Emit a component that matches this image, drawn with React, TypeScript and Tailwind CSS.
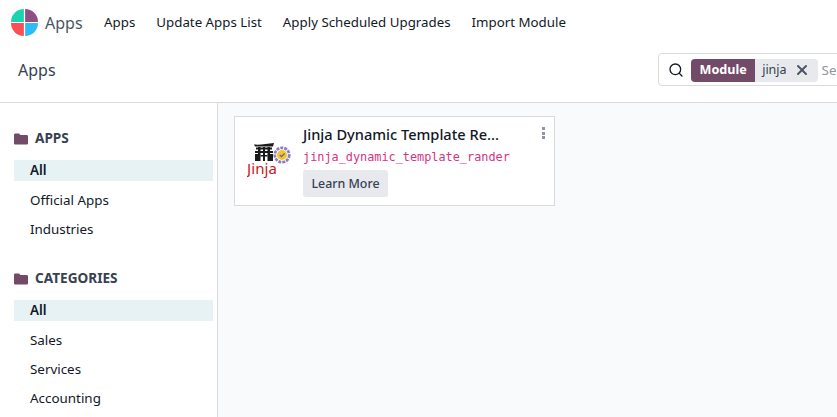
import { Search, X } from "lucide-react";

const font = { fontFamily: '"Noto Sans", sans-serif' };

const navItems = ["Apps", "Update Apps List", "Apply Scheduled Upgrades", "Import Module"];
const appFilters = ["All", "Official Apps", "Industries"];
const categories = ["All", "Sales", "Services", "Accounting"];

const AppLogo = () => (
  <svg width="27" height="27" viewBox="0 0 26 26">
    <path d="M12.4 12.4H0A12.4 12.4 0 0 1 12.4 0Z" fill="#1ad3b0" />
    <path d="M13.6 12.4V0A12.4 12.4 0 0 1 26 12.4Z" fill="#8f4f86" />
    <path d="M12.4 13.6V26A12.4 12.4 0 0 1 0 13.6Z" fill="#fb4f56" />
    <path d="M13.6 13.6H26A12.4 12.4 0 0 1 13.6 26Z" fill="#2dbcfb" />
  </svg>
);

const FolderIcon = () => (
  <svg width="14" height="12" viewBox="0 0 14 12">
    <path d="M1.3 0.5H5L6.5 2H12.7C13.4 2 14 2.6 14 3.3V10.2C14 10.9 13.4 11.5 12.7 11.5H1.3C0.6 11.5 0 10.9 0 10.2V1.8C0 1.1 0.6 0.5 1.3 0.5Z" fill="#714b67" />
  </svg>
);

const JinjaLogo = () => (
  <svg width="46" height="36" viewBox="0 0 46 36">
    <g fill="#1a1a1a">
      <path d="M7 1.5C13 2 20 1 27 0L26 3.5H8Z" />
      <rect x="9" y="4.5" width="16" height="2" />
      <rect x="8" y="8" width="18" height="2" />
      <rect x="11" y="4" width="2.5" height="14" />
      <rect x="20.5" y="4" width="2.5" height="14" />
      <rect x="16" y="4" width="2" height="14" />
      <rect x="8" y="11" width="3" height="7" />
      <rect x="23" y="11" width="3" height="7" />
      <rect x="13.5" y="12" width="7" height="1.5" />
    </g>
    <circle cx="35" cy="12" r="7.2" fill="none" stroke="#8e7cc3" strokeWidth="2.8" strokeDasharray="3 1" />
    <circle cx="35" cy="12" r="5" fill="#f4c430" />
    <path d="M32.8 12 34.5 13.7 37.5 10.5" fill="none" stroke="#5b6b8c" strokeWidth="1.2" />
    <text x="0" y="31" fill="#c8161d" fontSize="15" fontFamily="Noto Sans, sans-serif" textLength="30">
      Jinja
    </text>
  </svg>
);

const FilterGroup = ({ title, items }: { title: string; items: string[] }) => (
  <div className="mb-[20px]">
    <div className="flex h-[21px] items-center gap-[7px] pl-[14px] text-[13.6px] font-bold text-[#374151]">
      <FolderIcon />
      <span>{title}</span>
    </div>
    <ul className="mt-[11px] ml-[14px] flex w-[199px] flex-col text-[13.4px] text-[#111827]">
      {items.map((item, i) => (
        <li
          key={item}
          className={`flex h-[21px] items-center pl-[16px] ${
            i === 0 ? "mb-[9px] bg-[#e6f2f3] font-semibold" : "mb-[8px]"
          }`}
        >
          {item}
        </li>
      ))}
    </ul>
  </div>
);

export default function App() {
  return (
    <div className="flex h-[417px] w-[837px] flex-col overflow-hidden bg-white" style={font}>
      <header className="flex h-[45px] shrink-0 items-center text-[13.3px] text-[#111827]">
        <div className="ml-[11px] flex items-center gap-[7px]">
          <AppLogo />
          <span className="text-[16px] text-[#4b5563]">Apps</span>
        </div>
        <nav className="ml-[21.5px] flex gap-[21px]">
          {navItems.map((item) => (
            <span key={item}>{item}</span>
          ))}
        </nav>
      </header>

      <div className="flex h-[58px] shrink-0 items-start justify-between border-b border-[#d8dadd]">
        <h1 className="mt-[13px] ml-[18px] text-[16px] leading-[24px] text-[#374151]">Apps</h1>
        <div className="mt-[8px] -mr-[21px] flex h-[33px] w-[200px] items-center rounded-[4px] border border-[#d8dadd] pt-[1px] pl-[9px] text-[13.4px]">
          <Search size={16} strokeWidth={2} className="text-[#111827]" />
          <div className="ml-[7px] flex h-[23px] items-center rounded-[4px] bg-[#e7e9ed]">
            <span className="flex h-full items-center rounded-l-[4px] bg-[#714b67] px-[8.5px] text-[12.6px] font-bold text-white">
              Module
            </span>
            <span className="ml-[7px] text-[12.5px] text-[#374151]">jinja</span>
            <X size={16} strokeWidth={3} className="mr-[8px] ml-[7px] text-[#4b5563]" />
          </div>
          <span className="ml-[4px] text-[#8f959e]">Se</span>
        </div>
      </div>

      <div className="flex min-h-0 flex-1">
        <aside className="w-[218px] shrink-0 border-r border-[#d8dadd] pt-[25px]">
          <FilterGroup title="APPS" items={appFilters} />
          <FilterGroup title="CATEGORIES" items={categories} />
        </aside>

        <main className="flex-1 bg-[#f9fafb] pt-[13px] pl-[16px]">
          <div className="relative flex h-[90px] w-[321px] border border-[#d8dadd] bg-white">
            <div className="mt-[26px] ml-[12px]">
              <JinjaLogo />
            </div>
            <div className="mt-[7px] ml-[10px] flex flex-col items-start">
              <div className="text-[14.6px] leading-[21px] font-medium text-[#111827]">
                Jinja Dynamic Template Re...
              </div>
              <code
                className="mt-[3px] text-[11.85px] leading-[18px] text-[#d63384]"
                style={{ fontFamily: '"DejaVu Sans Mono", monospace' }}
              >
                jinja_dynamic_template_rander
              </code>
              <button className="mt-[4px] flex h-[27px] w-[85px] items-center justify-center rounded-[3px] bg-[#e7e9ed] pt-[2px] text-[12.4px] font-medium text-[#374151]">
                Learn More
              </button>
            </div>
            <div className="absolute top-[10px] right-[9px] flex flex-col gap-[1.5px]">
              <span className="size-[3px] bg-[#8f94ab]" />
              <span className="size-[3px] bg-[#8f94ab]" />
              <span className="size-[3px] bg-[#8f94ab]" />
            </div>
          </div>
        </main>
      </div>
    </div>
  );
}
